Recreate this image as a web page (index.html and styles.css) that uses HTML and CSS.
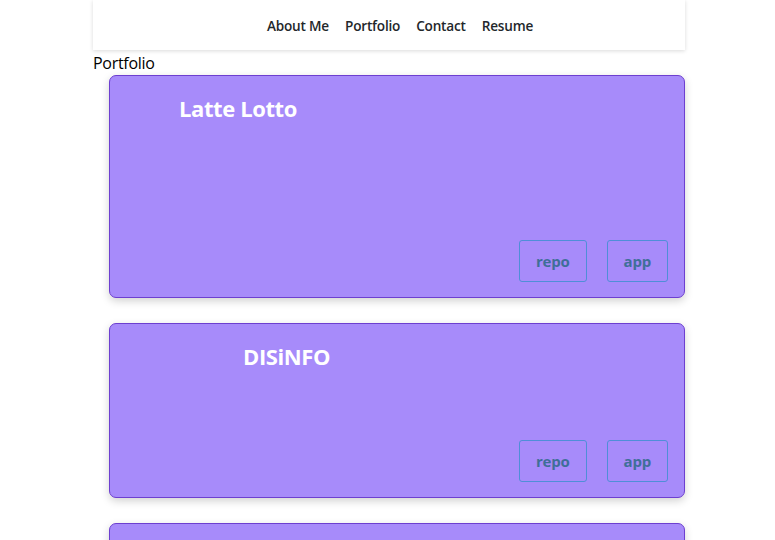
FILE: index.html
```html
<!DOCTYPE html>
<html>
<head>
<meta charset="utf-8">
<link rel="stylesheet" href="styles.css">
</head>
<body>
<div class="page">
  <nav class="navbar">
    <a class="nav-link" href="#">About Me</a>
    <a class="nav-link" href="#">Portfolio</a>
    <a class="nav-link" href="#">Contact</a>
    <a class="nav-link" href="#">Resume</a>
  </nav>
  <div class="section-title">Portfolio</div>
  <div class="cards">
    <div class="card card-tall">
      <h2 class="card-title title-a">Latte Lotto</h2>
      <div class="card-actions">
        <a class="btn" href="#">repo</a>
        <a class="btn" href="#">app</a>
      </div>
    </div>
    <div class="card card-short">
      <h2 class="card-title title-b">DISiNFO</h2>
      <div class="card-actions">
        <a class="btn" href="#">repo</a>
        <a class="btn" href="#">app</a>
      </div>
    </div>
    <div class="card card-short">
      <h2 class="card-title title-a">&nbsp;</h2>
    </div>
  </div>
</div>
</body>
</html>
```
FILE: styles.css
```css
* { box-sizing: border-box; }
html, body { margin: 0; padding: 0; background: #fff; overflow: hidden; }
body { font-family: "Open Sans", "Noto Sans", sans-serif; color: #000; }
.page { width: 592px; margin-left: 93px; }
.navbar {
  height: 50px;
  display: flex;
  justify-content: center;
  align-items: center;
  gap: 16px;
  padding-left: 22px;
  background: #fff;
  box-shadow: 0 1px 4px rgba(0,0,0,0.15);
}
.nav-link {
  font-size: 13.6px;
  font-weight: 600;
  color: #23272b;
  text-decoration: none;
  letter-spacing: -0.2px;
}
.section-title {
  font-size: 16px;
  line-height: 21px;
  margin-top: 3px;
  letter-spacing: -0.3px;
}
.cards { display: flex; flex-direction: column; gap: 25px; padding-left: 16px; padding-top: 1px; }
.card {
  background: #a78bfa;
  border: 1px solid #6d3fd0;
  border-radius: 7px;
  box-shadow: 0 3px 8px rgba(0,0,0,0.18);
  display: flex;
  flex-direction: column;
  justify-content: space-between;
}
.card-tall { height: 223px; }
.card-short { height: 175px; }
.card-title {
  margin: 0;
  padding-top: 17px;
  font-size: 22px;
  line-height: 30px;
  font-weight: 700;
  color: #fff;
  letter-spacing: -0.4px;
}
.title-a { padding-left: 69px; }
.title-b { padding-left: 133px; }
.card-actions {
  display: flex;
  justify-content: flex-end;
  gap: 20px;
  padding: 0 16px 15px 0;
}
.btn {
  display: block;
  height: 42px;
  padding: 0 16px;
  line-height: 40px;
  border: 1px solid #4f8ed8;
  border-radius: 3px;
  font-size: 15px;
  font-weight: 700;
  color: #3f6f98;
  text-decoration: none;
  letter-spacing: -0.2px;
}
```
